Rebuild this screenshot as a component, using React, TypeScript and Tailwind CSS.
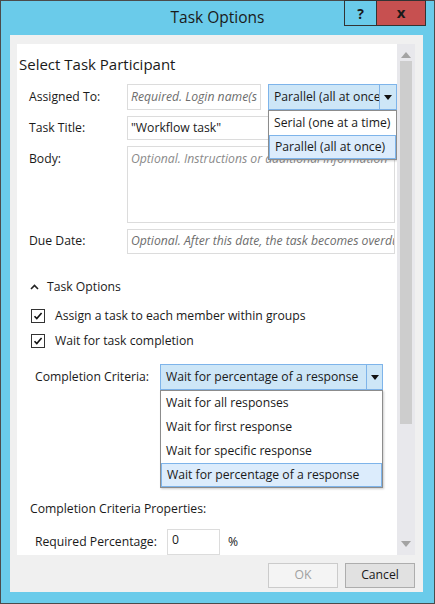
import React from "react";

const Caret = () => (
  <svg width="8" height="5" viewBox="0 0 8 5">
    <path d="M0 0h8L4 5z" fill="#111" />
  </svg>
);

const Check = () => (
  <div className="w-[14px] h-[14px] border border-[#333] bg-white flex items-center justify-center">
    <svg width="10" height="10" viewBox="0 0 10 10">
      <path d="M1.5 5.2l2.3 2.4L8.6 2" fill="none" stroke="#111" strokeWidth="1.6" />
    </svg>
  </div>
);

const App: React.FC = () => {
  return (
    <div className="w-[435px] h-[604px] bg-[#6acbea] border border-[#4b4b4b] flex flex-col font-['Open_Sans','Noto_Sans',sans-serif] text-[12.2px] text-[#1a1a1a]">
      {/* title bar */}
      <div className="relative h-[34px] flex items-center justify-center shrink-0">
        <span className="text-[15.5px] text-[#1a1a1a] -mt-[1px]">Task Options</span>
        <div className="absolute -top-[1px] right-[8px] flex">
          <div className="w-[33px] h-[26px] border border-[#333] flex items-center justify-center font-bold text-[14px]">?</div>
          <div className="w-[49px] h-[26px] border border-l-0 border-[#333] bg-[#c75050] flex items-center justify-center font-bold text-[15px] leading-none pb-[2px]">x</div>
        </div>
      </div>

      {/* dialog panel */}
      <div className="ml-[9px] w-[413px] h-[557px] bg-[#f0f0f0] flex flex-col pt-[9px] pl-[7px] pr-[8px]">
        <div className="flex h-[511px]">
          <div className="relative w-[380px] h-full bg-white overflow-hidden flex flex-col">
            <div className="mt-[10px] pl-[2px] h-[20px] text-[15px] leading-[20px]">Select Task Participant</div>

            {/* Assigned to */}
            <div className="mt-[10px] flex items-center h-[26px]">
              <div className="pl-[12px] w-[110px]">Assigned To:</div>
              <div className="w-[134px] h-[26px] border border-[#dcdcdc] px-[3px] flex items-center italic text-[#6d6d6d] whitespace-nowrap overflow-hidden">Required. Login name(s</div>
              <div className="relative ml-[7px] w-[129px] h-[26px] border border-[#7eb4ea] bg-[#cde6f7] flex">
                <div className="flex-1 px-[5px] flex items-center whitespace-nowrap overflow-hidden">Parallel (all at once)</div>
                <div className="w-[17px] border-l border-[#7eb4ea] flex items-center justify-center"><Caret /></div>
                <div className="absolute left-[-1px] top-[25px] w-[129px] bg-white border border-[#8c8c8c] shadow-[1px_1px_2px_rgba(0,0,0,0.2)] z-10 flex flex-col">
                  <div className="h-[24px] px-[5px] flex items-center whitespace-nowrap">Serial (one at a time)</div>
                  <div className="h-[24px] px-[5px] flex items-center whitespace-nowrap bg-[#dcecfc] border border-[#7eb4ea]">Parallel (all at once)</div>
                </div>
              </div>
            </div>

            {/* Task title */}
            <div className="mt-[6px] flex items-center h-[24px]">
              <div className="pl-[12px] w-[110px]">Task Title:</div>
              <div className="w-[268px] h-[24px] border border-[#dcdcdc] px-[3px] flex items-center">"Workflow task"</div>
            </div>

            {/* Body */}
            <div className="mt-[6px] flex h-[77px]">
              <div className="pl-[12px] w-[110px] pt-[4px]">Body:</div>
              <div className="w-[268px] h-[77px] border border-[#dcdcdc] px-[3px] pt-[3px] italic text-[#8a8a8a] whitespace-nowrap overflow-hidden">Optional. Instructions or additional information</div>
            </div>

            {/* Due date */}
            <div className="mt-[6px] flex items-center h-[25px]">
              <div className="pl-[12px] w-[110px]">Due Date:</div>
              <div className="w-[268px] h-[25px] border border-[#dcdcdc] px-[3px] flex items-center italic text-[#6d6d6d] whitespace-nowrap overflow-hidden">Optional. After this date, the task becomes overdue</div>
            </div>

            {/* Task options */}
            <div className="mt-[23px] h-[20px] flex items-center pl-[13px]">
              <svg width="9" height="6" viewBox="0 0 9 6" className="mr-[8px]">
                <path d="M1 5l3.5-3.5L8 5" fill="none" stroke="#222" strokeWidth="1.6" />
              </svg>
              <span>Task Options</span>
            </div>
            <div className="mt-[9px] h-[20px] flex items-center pl-[14px] gap-[10px]">
              <Check />
              <span>Assign a task to each member within groups</span>
            </div>
            <div className="mt-[5px] h-[20px] flex items-center pl-[14px] gap-[10px]">
              <Check />
              <span>Wait for task completion</span>
            </div>

            {/* Completion criteria */}
            <div className="mt-[13px] flex items-center h-[26px]">
              <div className="pl-[18px] w-[143px]">Completion Criteria:</div>
              <div className="relative w-[223px] h-[26px] border border-[#7eb4ea] bg-[#cde6f7] flex">
                <div className="flex-1 px-[5px] flex items-center whitespace-nowrap overflow-hidden">Wait for percentage of a response</div>
                <div className="w-[16px] border-l border-[#7eb4ea] flex items-center justify-center"><Caret /></div>
                <div className="absolute left-[-1px] top-[25px] w-[223px] bg-white border border-[#8c8c8c] shadow-[1px_1px_2px_rgba(0,0,0,0.2)] z-10 flex flex-col">
                  <div className="h-[24px] px-[5px] flex items-center">Wait for all responses</div>
                  <div className="h-[24px] px-[5px] flex items-center">Wait for first response</div>
                  <div className="h-[24px] px-[5px] flex items-center">Wait for specific response</div>
                  <div className="h-[24px] px-[5px] flex items-center bg-[#dcecfc] border border-[#7eb4ea]">Wait for percentage of a response</div>
                </div>
              </div>
            </div>

            <div className="mt-[110px] h-[18px] flex items-center pl-[13px]">Completion Criteria Properties:</div>
            <div className="mt-[11px] flex items-center h-[26px] shrink-0">
              <div className="pl-[18px] w-[150px]">Required Percentage:</div>
              <div className="w-[53px] h-[26px] border border-[#dcdcdc] px-[4px] pt-[1px]">0</div>
              <div className="ml-[8px]">%</div>
            </div>
          </div>

          {/* scrollbar */}
          <div className="w-[18px] h-full bg-[#e8e8ec] flex flex-col items-center">
            <svg width="10" height="6" viewBox="0 0 10 6" className="mt-[8px]">
              <path d="M0 6h10L5 0z" fill="#a3a3a3" />
            </svg>
            <div className="mt-[3px] w-[12px] h-[363px] bg-[#cdcdcd]" />
            <div className="flex-1" />
            <svg width="10" height="6" viewBox="0 0 10 6" className="mb-[8px]">
              <path d="M0 0h10L5 6z" fill="#a3a3a3" />
            </svg>
          </div>
        </div>

        {/* buttons */}
        <div className="mt-[8px] flex justify-end gap-[7px]">
          <div className="w-[70px] h-[25px] border border-[#cbcbcb] bg-[#f4f4f4] text-[#a0a0a0] flex items-center justify-center">OK</div>
          <div className="w-[70px] h-[25px] border border-[#adadad] bg-[#e1e1e1] flex items-center justify-center">Cancel</div>
        </div>
      </div>
    </div>
  );
};

export default App;
